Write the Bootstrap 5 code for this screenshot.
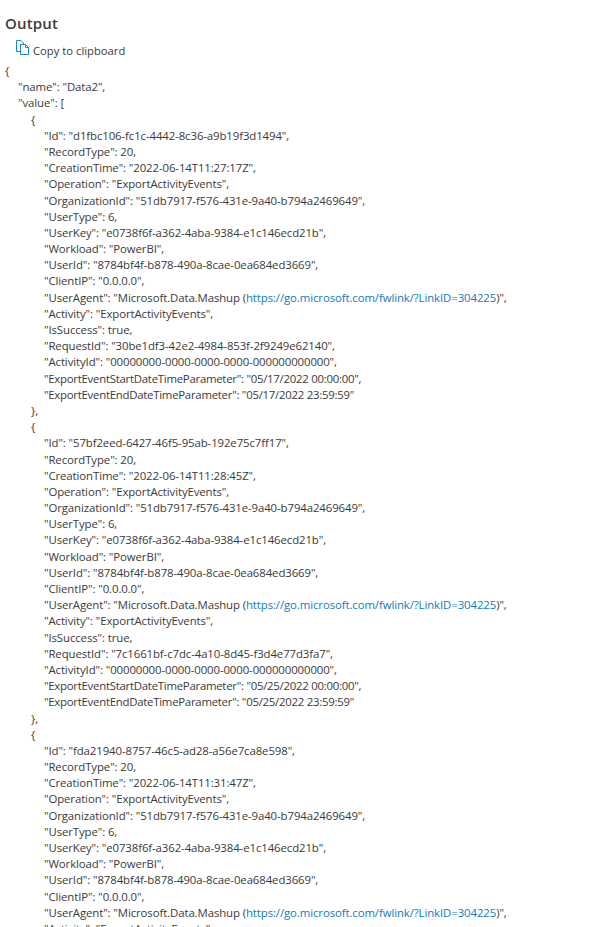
<!DOCTYPE html>
<html lang="en"><head><meta charset="utf-8"><title>Output</title>
<link href="https://cdn.jsdelivr.net/npm/bootstrap@5.3.0/dist/css/bootstrap.min.css" rel="stylesheet">
<style>
html,body{height:927px;overflow:hidden;background:#fff}
body{font-family:"Open Sans","Noto Sans",sans-serif;color:#333;}
.out-wrap{padding:14px 0 0 5px}
.out-title{font-size:15px;font-weight:600;line-height:18px;color:#3b3b3b;margin:0;letter-spacing:.15px}
.copy-row{padding-left:11px;height:22px;margin-top:8px;font-size:11.25px;color:#3a3a3a;gap:3px;line-height:16px}
.copy-row svg{width:14px;height:16px;margin-top:-7px}
.json-block{margin:1px 0 0;font-size:11.4px;line-height:16.19px;color:#3a3a3a;letter-spacing:-.1px}
.json-block div{white-space:pre;height:16.19px}
.in1{padding-left:13px}.in2{padding-left:26px}.in3{padding-left:39px}
.json-block .tight-line{letter-spacing:-.26px}
.json-block a{color:#0f7bc4;text-decoration:none}
</style></head><body>
<div class="out-wrap">
<h2 class="out-title">Output</h2>
<div class="copy-row d-flex align-items-center">
<svg viewBox="0 0 14 16" fill="none" stroke="#1a86d0" stroke-width="1"><path d="M4.5 11.5H.5V.5h4.5l2.5 2.5v1"/><path d="M4.5 4.5h5l3 3v7h-8z"/><path d="M9.5 4.5v3h3"/></svg>
<span>Copy to clipboard</span></div>
<div class="json-block" id="jsonOut"></div>
</div>
<script>
function rec(id,time,req,day){return [
'{',
'  "Id": "'+id+'",','  "RecordType": 20,','  "CreationTime": "'+time+'",','  "Operation": "ExportActivityEvents",','  "OrganizationId": "51db7917-f576-431e-9a40-b794a2469649",','  "UserType": 6,','  "UserKey": "e0738f6f-a362-4aba-9384-e1c146ecd21b",','  "Workload": "PowerBI",','  "UserId": "8784bf4f-b878-490a-8cae-0ea684ed3669",','  "ClientIP": "0.0.0.0",','  "UserAgent": "Microsoft.Data.Mashup (<a href="#">https://go.microsoft.com/fwlink/?LinkID=304225</a>)",','  "Activity": "ExportActivityEvents",','  "IsSuccess": true,','  "RequestId": "'+req+'",','  "ActivityId": "00000000-0000-0000-0000-000000000000",','  "ExportEventStartDateTimeParameter": "'+day+' 00:00:00",','  "ExportEventEndDateTimeParameter": "'+day+' 23:59:59"','},'];}
var L=[[0,'{'],[1,'"name": "Data2",'],[1,'"value": [']];
[rec("d1fbc106-fc1c-4442-8c36-a9b19f3d1494","2022-06-14T11:27:17Z","30be1df3-42e2-4984-853f-2f9249e62140","05/17/2022"),
 rec("57bf2eed-6427-46f5-95ab-192e75c7ff17","2022-06-14T11:28:45Z","7c1661bf-c7dc-4a10-8d45-f3d4e77d3fa7","05/25/2022"),
 rec("fda21940-8757-46c5-ad28-a56e7ca8e598","2022-06-14T11:31:47Z","","05/25/2022").slice(0,14)].forEach(function(r){r.forEach(function(s){
  if(s.slice(0,2)=='  ')L.push([3,s.slice(2)]);else L.push([2,s]);});});
document.getElementById('jsonOut').innerHTML=L.map(function(x){var c=x[0]?'in'+x[0]:'';if(x[1].indexOf('ExportEvent')==1)c+=' tight-line';return '<div class="'+c+'">'+x[1]+'</div>';}).join('');
</script>
<script src="https://cdn.jsdelivr.net/npm/bootstrap@5.3.0/dist/js/bootstrap.bundle.min.js"></script>
</body></html>
